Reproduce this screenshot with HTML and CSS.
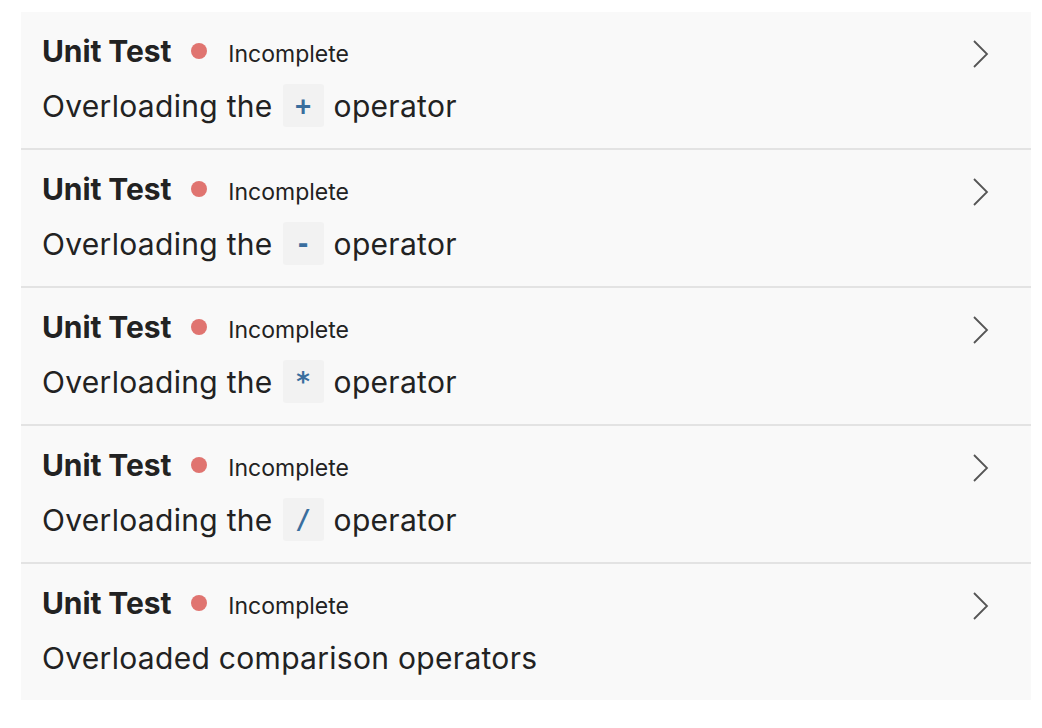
FILE: index.html
```html
<!DOCTYPE html>
<html lang="en">
<head>
<meta charset="utf-8">
<title>Unit Tests</title>
<link rel="stylesheet" href="styles.css">
</head>
<body>
<ul class="list">
  <li class="item">
    <div class="content">
      <div class="head"><span class="kind">Unit Test</span><span class="dot"></span><span class="status">Incomplete</span></div>
      <div class="title"><span>Overloading the</span><code class="chip">+</code><span>operator</span></div>
    </div>
    <svg class="chevron" width="18" height="28" viewBox="0 0 18 28"><path d="M3 1 L16 14 L3 27" fill="none" stroke="#555" stroke-width="1.8"/></svg>
  </li>
  <li class="item">
    <div class="content">
      <div class="head"><span class="kind">Unit Test</span><span class="dot"></span><span class="status">Incomplete</span></div>
      <div class="title"><span>Overloading the</span><code class="chip">-</code><span>operator</span></div>
    </div>
    <svg class="chevron" width="18" height="28" viewBox="0 0 18 28"><path d="M3 1 L16 14 L3 27" fill="none" stroke="#555" stroke-width="1.8"/></svg>
  </li>
  <li class="item">
    <div class="content">
      <div class="head"><span class="kind">Unit Test</span><span class="dot"></span><span class="status">Incomplete</span></div>
      <div class="title"><span>Overloading the</span><code class="chip">*</code><span>operator</span></div>
    </div>
    <svg class="chevron" width="18" height="28" viewBox="0 0 18 28"><path d="M3 1 L16 14 L3 27" fill="none" stroke="#555" stroke-width="1.8"/></svg>
  </li>
  <li class="item">
    <div class="content">
      <div class="head"><span class="kind">Unit Test</span><span class="dot"></span><span class="status">Incomplete</span></div>
      <div class="title"><span>Overloading the</span><code class="chip">/</code><span>operator</span></div>
    </div>
    <svg class="chevron" width="18" height="28" viewBox="0 0 18 28"><path d="M3 1 L16 14 L3 27" fill="none" stroke="#555" stroke-width="1.8"/></svg>
  </li>
  <li class="item">
    <div class="content">
      <div class="head"><span class="kind">Unit Test</span><span class="dot"></span><span class="status">Incomplete</span></div>
      <div class="title"><span>Overloaded comparison operators</span></div>
    </div>
    <svg class="chevron" width="18" height="28" viewBox="0 0 18 28"><path d="M3 1 L16 14 L3 27" fill="none" stroke="#555" stroke-width="1.8"/></svg>
  </li>
</ul>
</body>
</html>
```
FILE: styles.css
```css
html, body {
  margin: 0;
  padding: 0;
  background: #ffffff;
}
body {
  font-family: Inter, "Noto Sans", sans-serif;
  color: #222222;
}
.list {
  list-style: none;
  margin: 12px 11px 0 21px;
  padding: 0;
  background: #f9f9f9;
}
.item {
  display: flex;
  align-items: flex-start;
  justify-content: space-between;
  padding: 21px 42px 21px 21px;
  border-bottom: 2px solid #e3e3e3;
}
.item:last-child {
  border-bottom: none;
}
.content {
  display: flex;
  flex-direction: column;
  gap: 15px;
}
.head {
  display: flex;
  align-items: baseline;
  height: 36px;
}
.kind {
  font-size: 30px;
  line-height: 36px;
  font-weight: 700;
  letter-spacing: -0.1px;
}
.dot {
  width: 16px;
  height: 16px;
  border-radius: 50%;
  background: #e07470;
  margin: 0 21px 0 20px;
  align-self: center;
}
.status {
  font-size: 23px;
  line-height: 36px;
  font-weight: 400;
}
.title {
  display: flex;
  align-items: center;
  gap: 10px;
  min-height: 43px;
  font-size: 30px;
  line-height: 36px;
  letter-spacing: 0.3px;
}
.chip {
  display: inline-flex;
  align-items: center;
  justify-content: center;
  width: 41px;
  height: 43px;
  background: #f2f2f2;
  border-radius: 3px;
  font-family: "DejaVu Sans Mono", "Liberation Mono", monospace;
  font-size: 26px;
  font-weight: 700;
  letter-spacing: 0;
  color: #3a6e9e;
}
.chevron {
  margin-top: 7px;
  flex: none;
}
```
